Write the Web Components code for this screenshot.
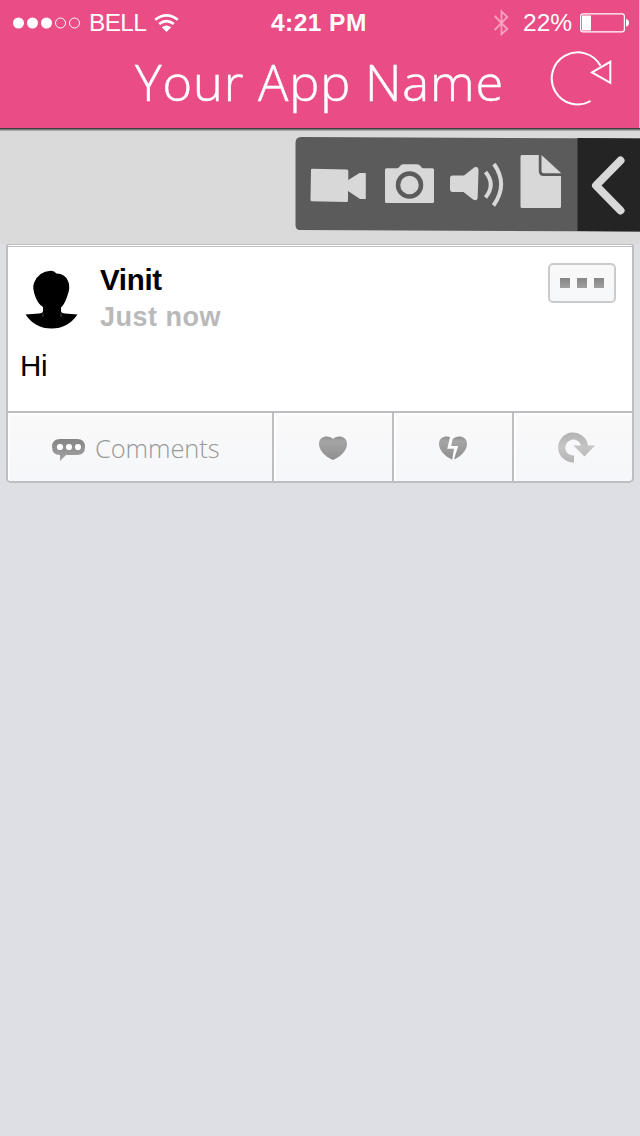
<!DOCTYPE html>
<html lang="en"><head><meta charset="utf-8"><title>Your App Name</title>
<style>html,body{margin:0;background:#dedfe4}body{font-family:"Liberation Sans",Arial,sans-serif;width:640px;height:1136px;overflow:hidden}</style></head>
<body><app-screen></app-screen>
<script>
const define=(name,html)=>customElements.define(name,class extends HTMLElement{
 constructor(){super();this.attachShadow({mode:'open'}).innerHTML=html;}
});
define('status-bar',`<style>
:host{display:flex;height:46px;align-items:center;color:#fff;font-size:24.5px;line-height:46px;white-space:nowrap}
svg{display:block;flex:none}.carrier,.time,.right{display:flex;align-items:center}
.carrier{width:258px;padding-left:13px}.bell{width:58px;margin:0 6px 0 8px;letter-spacing:-.7px}
.carrier svg{margin-top:-1px}
.time{width:223px;font-weight:bold;font-size:24.5px;letter-spacing:.45px}
.right{margin-top:-1px}.pct{width:51px;margin:1px 6px 0 14px;letter-spacing:0}
</style>
<div class="carrier"><svg width="68" height="14" viewBox="0 0 68 14"><g fill="#fff"><circle cx="5.5" cy="7" r="5.5"/><circle cx="19.5" cy="7" r="5.5"/><circle cx="33.5" cy="7" r="5.5"/></g><g fill="none" stroke="#fff"><circle cx="47.5" cy="7" r="5"/><circle cx="61.5" cy="7" r="5"/></g></svg>
<span class="bell">BELL</span>
<svg width="26" height="20" viewBox="153 12 26 20"><g fill="none" stroke="#fff" stroke-width="2.7"><path d="M155.2 18.8Q166.5 10 177.8 18.8"/><path d="M159.2 23Q166.5 17.2 173.8 23"/></g><path fill="#fff" d="M161.7 26.3Q166.5 22.8 171.3 26.3L166.5 31Z"/></svg></div>
<div class="time">4:21 PM</div>
<div class="right"><svg width="15" height="28" viewBox="0 0 15 28"><path fill="none" stroke="#f7a0c0" stroke-width="1.8" d="M.7 7L13.3 20 7.5 25.2V2.4L13.3 8 .7 21"/></svg><span class="pct">22%</span>
<svg width="49" height="20" viewBox="0 0 49 20"><rect x=".6" y=".9" width="43.8" height="18" rx="2.4" fill="none" stroke="#fff" stroke-width="1.2"/><rect x="2" y="2.5" width="9" height="15" fill="#fff"/><path fill="#fff" d="M46 6q3 .5 3 3.8t-3 3.8z"/></svg></div>`);
define('app-header',`<style>
:host{display:block;height:128px;background:#ea4d86;border-right:1px solid #f5bfd1;width:640px;box-sizing:border-box}
.row{display:flex;height:82px;padding-left:135px}
h1{margin:0;width:415px;font:300 50.5px/72px "Open Sans",sans-serif;color:#fff;white-space:nowrap;letter-spacing:.85px;-webkit-text-stroke:.5px #fff}
svg{display:block;margin-top:3px}
</style><status-bar></status-bar><div class="row"><h1>Your App Name</h1><svg width="64" height="60" viewBox="549 49 64 60" fill="none" stroke="#fff" stroke-width="2"><path d="M589.6 101A26 26 0 1 1 599.5 65.8M591 72.4L609.3 61.8V82.8Z"/></svg></div>`);
define('attach-bar',`<style>
:host{display:flex;height:112px;background:#dadada;border-top:1px solid #3d4145;box-shadow:inset 0 1px #777,inset 0 2px #aaa;padding-top:3px;justify-content:flex-end}
svg{display:block;margin-top:4px}
</style><svg width="346" height="96" viewBox="294 136 346 96"><path d="M301 137L640 138.5V231.5L300 230Q295.5 230 295.5 225V143Q295.5 137 301 137Z" fill="#5b5b5b"/><path d="M577.5 138L640 138.5V231.5L577.5 231Z" fill="#242424"/>
<g fill="#d8d8d8"><path d="M312 168.8L347 169.5Q348.3 169.6 348.3 171V180L359.5 173H365.8V199H360L348 191V200.5Q348 202 346.5 202L312 201.3Q310.5 201.2 310.5 199.7L311 170Q311 168.8 312 168.8Z"/><path d="M386.5 168.3H397.5Q399 168 400 166Q401 164.2 403.5 164.2H417Q419.5 164.2 420.5 166Q421.5 168 423 168.3H432.5Q434 168.3 434 170V202Q434 203 432.5 203H386.5Q385 203 385 201.5V170Q385 168.3 386.5 168.3Z"/><path d="M452.5 175.5H464L474.5 167.3Q478.8 166 478.5 171L477.7 197Q477.5 202 473 199.5L463.5 192H452.5Q450 192 450 189V178.5Q450 175.5 452.5 175.5Z"/><path d="M522 155H538.8V171Q538.8 176 543.5 176H561V206.5Q561 208 559.5 208H522Q520.5 208 520.5 206.5V156.5Q520.5 155 522 155Z"/><path d="M541.5 155L561.3 173.3H544Q541.5 173.3 541.5 171Z"/></g>
<circle cx="409.5" cy="185" r="11.5" fill="none" stroke="#5b5b5b" stroke-width="4.5"/><g fill="none" stroke="#d8d8d8" stroke-width="4"><path d="M485.5 172Q496 184.5 485.5 197.5M494 164Q508.5 184.5 493.5 205.5"/></g><path d="M620.5 160.5L596 185.5 620.5 210.5" fill="none" stroke="#d8d8d8" stroke-width="8" stroke-linecap="round" stroke-linejoin="round"/></svg>`);
define('more-button',`<style>:host{display:flex;box-sizing:border-box;width:68px;height:40px;border:2px solid #cbcbcb;border-radius:5px;background:linear-gradient(#f9f9f9,#f6f7f9);gap:7px;align-items:center;justify-content:center}i{width:10px;height:10px;background:linear-gradient(#858585,#a0a0a0)}</style><i></i><i></i><i></i>`);
define('action-cell',`<style>:host{display:flex;height:68px;align-items:center;justify-content:center;background:linear-gradient(#f9f9f9,#f6f7fa);box-shadow:inset 2px 2px #fff}</style><slot></slot>`);
define('post-actions',`<style>
:host{display:grid;grid-template-columns:264px 118px 118px 118px;column-gap:2px;background:#bdbec2;border-top:2px solid #bdbec2}
svg{display:block;margin-top:1px}.c{display:flex;align-items:center}.c svg{margin:5px 9px 0 -9px}
span{font:300 25.5px/36px "Open Sans",sans-serif;color:#999;letter-spacing:-.1px;width:124px;white-space:nowrap;padding-top:2px}
</style>
<action-cell><div class="c"><svg width="34" height="24" viewBox="0 0 34 24"><defs><linearGradient id="a" x2="0" y2="1"><stop stop-color="#858585"/><stop offset="1" stop-color="#a3a3a3"/></linearGradient></defs><path fill="url(#a)" d="M8 1H25Q33 1 33 9T25 17H14L8 23V17Q0 17 0 9T8 1Z"/><g fill="#fff"><circle cx="8" cy="9" r="3.1"/><circle cx="17" cy="9" r="3.1"/><circle cx="26" cy="9" r="3.1"/></g></svg><span>Comments</span></div></action-cell>
<action-cell><svg width="28" height="24" viewBox="0 0 28 24"><defs><linearGradient id="b" x2="0" y2="1"><stop stop-color="#8e8e8e"/><stop offset=".2" stop-color="#a4a5a4"/><stop offset="1" stop-color="#8f8f8f"/></linearGradient></defs><path fill="url(#b)" d="M14 3C17-1 28-1 28 8C28 16 19 22 14 24C9 22 0 16 0 8C0-1 11-1 14 3Z"/></svg></action-cell>
<action-cell><svg width="28" height="24" viewBox="0 0 28 24"><defs><linearGradient id="d" x2="0" y2="1"><stop stop-color="#8e8e8e"/><stop offset=".2" stop-color="#a4a5a4"/><stop offset="1" stop-color="#8f8f8f"/></linearGradient></defs><path fill="url(#d)" d="M14 3C17-1 28-1 28 8C28 16 19 22 14 24C9 22 0 16 0 8C0-1 11-1 14 3Z"/><path fill="#fff" d="M11.3 0H14.2L12.2 10H19.2L14.8 24H13.2L15 12.7H8.3Z"/></svg></action-cell>
<action-cell><svg width="37" height="31" viewBox="558 432.5 37 31" style="margin-left:7px;margin-top:0"><defs><linearGradient id="e" x2="0" y2="1"><stop stop-color="#b3b3b3"/><stop offset=".5" stop-color="#c5c5c5"/><stop offset="1" stop-color="#b4b4b4"/></linearGradient></defs><path fill="url(#e)" d="M574 463A15 15 0 1 1 588 446H595L584.5 457 573.5 446H581A8 8 0 1 0 574 456Z"/></svg></action-cell>`);
define('post-card',`<style>
:host{display:block;box-sizing:border-box;width:628px;height:239px;margin-left:6px;border:2px solid #bdbec2;border-top:1px solid #bdbec2;border-radius:3px 3px 5px 5px;overflow:hidden;background:#fff}
.line{height:1px;margin-top:1px;background:#bdbec2}
.top{display:flex;height:98px;padding:16px 16px 0 15px;box-sizing:border-box}
.top svg{margin:6px 21px 0 1px;flex:none}.who{flex:1;font-weight:bold;white-space:nowrap}
.name{font-size:29.5px;line-height:34px;color:#000;letter-spacing:-.3px}.when{font-size:27px;line-height:40px;color:#b9b9b9;letter-spacing:.5px}
.body{height:66px;padding-left:12px;font-size:29.5px;line-height:42px;color:#000;letter-spacing:-.3px}
</style><div class="line"></div><div class="top"><svg width="55" height="60" viewBox="24 269 55 60"><path fill="#000" d="M51 270.7Q54.5 270.7 56.5 273.5Q65 273.5 68 281Q71 287 67 297Q64 305 61 307.5V311Q61 313 65 313.5L77.5 314.5Q68 328.5 51.5 328.5T25.5 314.5L39 313.5Q43 313 43 311V307Q38 304 35.5 297Q32 288 34 283Q38 271.5 51 270.7Z"/><path d="M43 313V317M61 313V317" stroke="#444"/></svg>
<div class="who"><div class="name">Vinit</div><div class="when">Just now</div></div><more-button></more-button></div><div class="body">Hi</div><post-actions></post-actions>`);
define('app-screen',`<style>:host{display:block;width:640px;height:1136px;background:#dedfe4}</style><app-header></app-header><attach-bar></attach-bar><post-card></post-card>`);
</script></body></html>
